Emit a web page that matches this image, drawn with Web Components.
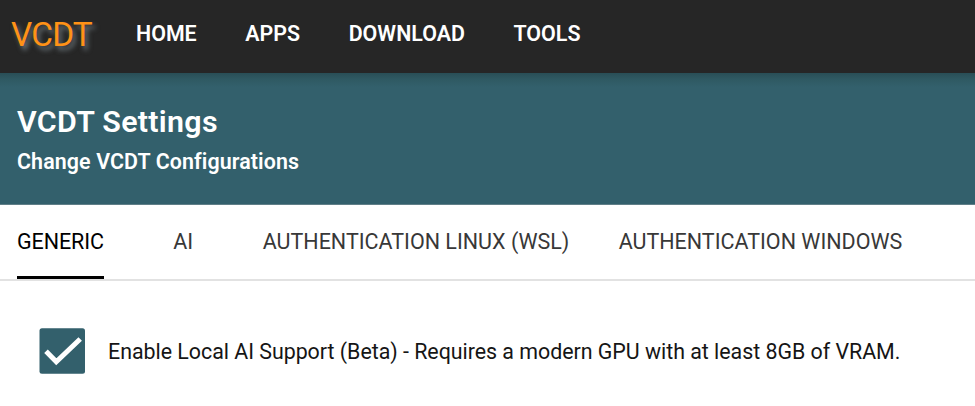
<!DOCTYPE html>
<html lang="en"><head><meta charset="utf-8"><title>VCDT Settings</title>
<style>body{margin:0;background:#fff;font-family:Roboto,sans-serif;overflow:hidden}</style></head><body>
<vcdt-app></vcdt-app>
<script>
const define=(name,html)=>customElements.define(name,class extends HTMLElement{
 constructor(){super();this.attachShadow({mode:'open'}).innerHTML=html;}
});
define('top-nav',`<style>:host{display:flex;height:73px;box-sizing:border-box;background:#262626;color:#fff;padding:0 11px;align-items:center}
.brand{font-size:33.4px;line-height:40px;color:#ff9216;width:125px;letter-spacing:-.8px;text-shadow:3px 4px 5px #6d777c;padding-bottom:3px;box-sizing:content-box}
nav{display:flex;gap:48.6px;font-size:21.4px;font-weight:600;line-height:26px;padding-bottom:5px;letter-spacing:0}</style>
<div class="brand">VCDT</div><nav><slot></slot></nav>`);
define('page-header',`<style>:host{display:block;height:132px;box-sizing:border-box;background:linear-gradient(#294e56,#2f5962 6px,#33606c 14px);color:#fff;padding:31px 17px 0;border-bottom:1px solid #607f88}
h1{font-size:30.4px;font-weight:600;line-height:36px;margin:0;letter-spacing:.3px}h2{font-size:21.4px;font-weight:600;line-height:26px;margin:9px 0 0;letter-spacing:.11px}</style><h1><slot name="title"></slot></h1><h2><slot></slot></h2>`);
define('tab-bar',`<style>:host{display:flex;height:76px;box-sizing:border-box;padding-left:17px;border-bottom:2px solid #e2e2e2;color:#383838}</style><slot></slot>`);
define('tab-item',`<style>:host{display:block;height:74px;box-sizing:border-box;font-size:21.5px;line-height:26px;padding-top:24px;white-space:nowrap}:host([active]){color:#000;width:87px;letter-spacing:-.1px;border-bottom:3px solid #000}</style><slot></slot>`);
define('check-option',`<style>:host{display:flex;align-items:center;padding:47px 39px 0;color:#151515;font-size:21.4px;letter-spacing:-.025px;line-height:26px;white-space:nowrap}svg{display:block;margin-right:23px;flex:none}span{padding-top:1px}</style><svg width="46" height="46" viewBox="0 0 46 46"><rect x=".5" y=".2" width="45.5" height="45.6" rx="2.5" fill="#33606c"/><path d="M7 23.2 17.3 33.8 41.2 11" fill="none" stroke="#fff" stroke-width="5"/></svg><span><slot></slot></span>`);
define('vcdt-app',`<style>:host{display:block}tab-item:nth-child(2){margin-left:69.3px}tab-item:nth-child(3){margin-left:69.5px}tab-item:nth-child(4){margin-left:49.3px}</style>
<top-nav><span>HOME</span><span>APPS</span><span>DOWNLOAD</span><span>TOOLS</span></top-nav><page-header><span slot="title">VCDT Settings</span>Change VCDT Configurations</page-header>
<tab-bar><tab-item active>GENERIC</tab-item><tab-item>AI</tab-item><tab-item>AUTHENTICATION LINUX (WSL)</tab-item><tab-item>AUTHENTICATION WINDOWS</tab-item></tab-bar><check-option>Enable Local AI Support (Beta) - Requires a modern GPU with at least 8GB of VRAM.</check-option>`);
</script></body></html>
